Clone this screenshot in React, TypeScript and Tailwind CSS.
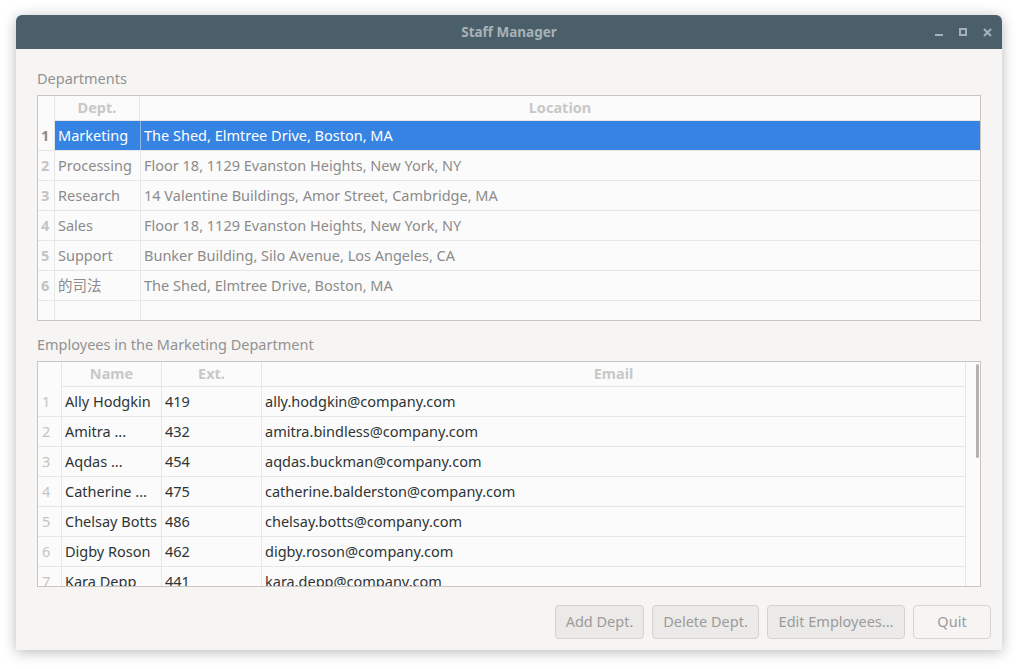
import React from "react";

const FONT = { fontFamily: '"Noto Sans", "Noto Sans CJK SC", sans-serif' };

const depts = [
  ["Marketing", "The Shed, Elmtree Drive, Boston, MA"],
  ["Processing", "Floor 18, 1129 Evanston Heights, New York, NY"],
  ["Research", "14 Valentine Buildings, Amor Street, Cambridge, MA"],
  ["Sales", "Floor 18, 1129 Evanston Heights, New York, NY"],
  ["Support", "Bunker Building, Silo Avenue, Los Angeles, CA"],
  ["的司法", "The Shed, Elmtree Drive, Boston, MA"],
];

const emps = [
  ["Ally Hodgkin", "419", "ally.hodgkin@company.com"],
  ["Amitra ...", "432", "amitra.bindless@company.com"],
  ["Aqdas ...", "454", "aqdas.buckman@company.com"],
  ["Catherine ...", "475", "catherine.balderston@company.com"],
  ["Chelsay Botts", "486", "chelsay.botts@company.com"],
  ["Digby Roson", "462", "digby.roson@company.com"],
  ["Kara Depp", "441", "kara.depp@company.com"],
];

function DeptTable() {
  return (
    <div className="h-[226px] border border-[#c9c6c2] bg-[#fbfbfb] overflow-hidden">
      <div className="flex h-[25px]">
        <div className="w-[16px] shrink-0" />
        <div className="flex flex-1 border-b border-[#e6e6e6]">
          <div className="w-[86px] shrink-0 border-l border-r border-[#e6e6e6] flex items-center justify-center text-[14.5px] font-bold text-[#c8c8c8]">
            Dept.
          </div>
          <div className="flex-1 flex items-center justify-center text-[14.5px] font-bold text-[#c8c8c8]">
            Location
          </div>
        </div>
      </div>
      {depts.map(([d, l], i) => {
        const sel = i === 0;
        return (
          <div key={i} className="flex h-[30px] border-b border-[#e6e6e6]">
            <div
              className={`w-[17px] shrink-0 border-r border-[#e6e6e6] flex items-center pl-[3px] text-[14.5px] font-bold ${
                sel ? "text-[#8a8a8a]" : "text-[#c4c4c4]"
              }`}
            >
              {i + 1}
            </div>
            <div
              className={`w-[86px] shrink-0 border-r flex items-center pl-[3px] text-[14.5px] whitespace-nowrap overflow-hidden ${
                sel ? "bg-[#3584e4] text-white border-[#8fb6e8]" : "text-[#8b8b8b] border-[#e6e6e6]"
              }`}
            >
              {d}
            </div>
            <div
              className={`flex-1 flex items-center pl-[3px] text-[14.5px] whitespace-nowrap ${
                sel ? "bg-[#3584e4] text-white" : "text-[#8b8b8b]"
              }`}
            >
              {l}
            </div>
          </div>
        );
      })}
      <div className="flex h-[19px]">
        <div className="w-[17px] shrink-0 border-r border-[#e6e6e6]" />
        <div className="w-[86px] shrink-0 border-r border-[#e6e6e6]" />
      </div>
    </div>
  );
}

function EmpTable() {
  return (
    <div className="relative h-[226px] border border-[#c9c6c2] bg-[#fbfbfb] overflow-hidden flex">
      <div className="w-[928px] shrink-0 border-r border-[#e6e6e6]">
        <div className="flex h-[25px]">
          <div className="w-[23px] shrink-0" />
          <div className="flex flex-1 border-b border-[#e6e6e6]">
            <div className="w-[101px] shrink-0 border-l border-r border-[#e6e6e6] flex items-center justify-center text-[14.5px] font-bold text-[#c8c8c8]">
              Name
            </div>
            <div className="w-[100px] shrink-0 border-r border-[#e6e6e6] flex items-center justify-center text-[14.5px] font-bold text-[#c8c8c8]">
              Ext.
            </div>
            <div className="flex-1 flex items-center justify-center text-[14.5px] font-bold text-[#c8c8c8]">
              Email
            </div>
          </div>
        </div>
        {emps.map(([n, e, m], i) => (
          <div key={i} className="flex h-[30px] border-b border-[#e6e6e6]">
            <div className="w-[24px] shrink-0 border-r border-[#e6e6e6] flex items-center pl-[4px] text-[14.5px] text-[#c4c4c4]">
              {i + 1}
            </div>
            <div className="w-[100px] shrink-0 border-r border-[#e6e6e6] flex items-center pl-[3px] text-[14.5px] text-[#2e3436] whitespace-nowrap overflow-hidden">
              {n}
            </div>
            <div className="w-[100px] shrink-0 border-r border-[#e6e6e6] flex items-center pl-[3px] text-[14.5px] text-[#2e3436]">
              {e}
            </div>
            <div className="flex-1 flex items-center pl-[3px] text-[14.5px] text-[#2e3436] whitespace-nowrap">
              {m}
            </div>
          </div>
        ))}
      </div>
      <div className="flex-1 relative">
        <div className="absolute left-[10px] top-[2px] w-[3px] h-[94px] rounded-full bg-[#b3b3b3]" />
      </div>
    </div>
  );
}

function Btn({ label, w, quit }: { label: string; w: string; quit?: boolean }) {
  return (
    <div
      className={`${w} h-[34px] rounded-[4px] border flex items-center justify-center text-[14.5px] text-[#9b9b9b] ${
        quit ? "bg-[#f6f5f4] border-[#d8d5d1]" : "bg-[#ebeae8] border-[#d5d2ce]"
      }`}
    >
      {label}
    </div>
  );
}

export default function App() {
  return (
    <div className="w-[1026px] h-[669px] bg-white pt-[15px] pl-[16px]" style={FONT}>
      <div className="w-[986px] h-[635px] rounded-t-[6px] bg-[#f6f5f4] shadow-[0_2px_14px_rgba(0,0,0,0.28)] flex flex-col overflow-hidden">
        <div className="h-[34px] shrink-0 bg-[#4b5f6a] relative flex items-center justify-center">
          <span className="text-[13.5px] font-bold text-[#a7b2b8]">Staff Manager</span>
          <div className="absolute right-[10px] top-0 h-full flex items-center gap-[16px]">
            <svg width="8" height="8" viewBox="0 0 8 8">
              <rect x="0" y="6" width="8" height="2" fill="#a7b2b8" />
            </svg>
            <svg width="8" height="8" viewBox="0 0 8 8">
              <rect x="1" y="1" width="6" height="6" fill="none" stroke="#a7b2b8" strokeWidth="2" />
            </svg>
            <svg width="9" height="9" viewBox="0 0 9 9">
              <path d="M1 1 L8 8 M8 1 L1 8" stroke="#a7b2b8" strokeWidth="2" />
            </svg>
          </div>
        </div>
        <div className="flex-1 flex flex-col pt-[20px] pl-[21px]">
          <div className="pr-[21px]">
            <div className="h-[18px] leading-[18px] text-[14.5px] text-[#929292] mb-[8px]">Departments</div>
            <DeptTable />
            <div className="h-[18px] leading-[18px] text-[14.5px] text-[#929292] mt-[14px] mb-[8px]">
              Employees in the Marketing Department
            </div>
            <EmpTable />
          </div>
          <div className="flex justify-end gap-[8px] pr-[11px] mt-[18px]">
            <Btn label="Add Dept." w="w-[89px]" />
            <Btn label="Delete Dept." w="w-[107px]" />
            <Btn label="Edit Employees..." w="w-[138px]" />
            <Btn label="Quit" w="w-[78px]" quit />
          </div>
        </div>
      </div>
    </div>
  );
}
